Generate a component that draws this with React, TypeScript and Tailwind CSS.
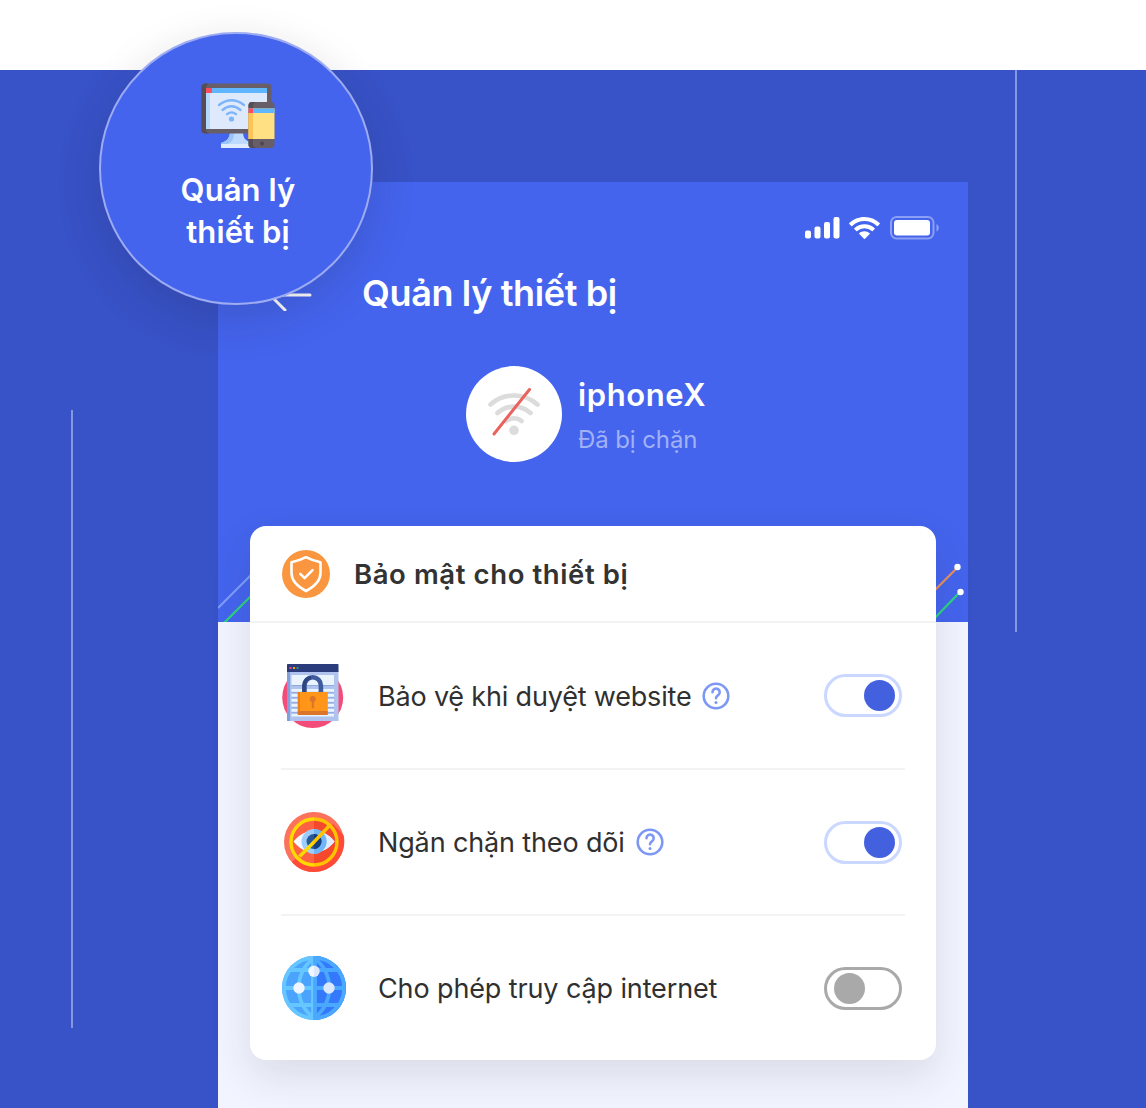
import type { ReactNode } from "react";

function DevicesIcon() {
  return (
    <svg className="mt-[49px] ml-1 h-[66px] w-[74px]" viewBox="0 0 74 66" fill="none">
      <path d="M29 48h13c0 7 2 9 7 11v5H20v-4c6-2 9-5 9-12Z" fill="#bedbff" />
      <path d="M29 48h4c0 8-1 11-7 13h-6v-1c6-2 9-5 9-12Z" fill="#9bc4fb" />
      <path d="M20 61h30v4H20z" fill="#deecfd" />
      <rect x=".5" y=".5" width="70" height="50" rx="4" fill="#685e68" />
      <path d="M5 .5h3c-2 1-3 2-3 4v42c0 2 1 3 3 4H5c-3 0-4.500-1-4.500-4V5C.5 2 2 .5 5 .5Z" fill="#554d56" />
      <path d="M5 5h61v41H5z" fill="#deeafb" />
      <path d="M5 10h4v36H5z" fill="#b3dafe" />
      <path d="M5 5h61v5H5z" fill="#60b7ff" />
      <path d="M5 5h6v5H5z" fill="#ff4b5b" />
      <g stroke="#7db4fa" strokeWidth="2.300" strokeLinecap="round">
        <path d="M18 22Q30.500 12.500 43 22M21.500 27Q30.500 19.500 39.500 27M26 31.200Q30.500 27.500 35 31.200" />
      </g>
      <circle cx="30.500" cy="36" r="2.600" fill="#7db4fa" />
      <rect x="47.500" y="19" width="26" height="46" rx="3.500" fill="#685e68" />
      <path d="M51 19h4c-2 1-3 2-3 4v38c0 2 1 3 3 4h-4c-2.500 0-3.500-1-3.500-3.500v-39C47.500 20 48.500 19 51 19Z" fill="#554d56" />
      <path d="M47.500 25.500h26V56h-26z" fill="#ffe082" />
      <path d="M47.500 30H52v26h-4.500z" fill="#ffc254" />
      <path d="M47.500 25.500h26V30h-26z" fill="#60b7ff" />
      <path d="M47.500 25.500H52V30h-4.500z" fill="#ff4b5b" />
      <circle cx="61" cy="60.500" r="2" fill="#4d454f" />
    </svg>
  );
}

function StatusBar() {
  return (
    <svg className="ml-[586px] h-6 w-[136px]" viewBox="0 0 136 24" fill="none">
      <g fill="#fff">
        <rect x="1" y="14.500" width="6" height="8" rx="2" />
        <rect x="10.500" y="10.500" width="6" height="12" rx="2" />
        <rect x="20" y="6" width="6" height="16.500" rx="2" />
        <rect x="29.500" y="1" width="6" height="21.500" rx="2" />
        <path d="M60.500 1C54.500 1 49.200 3.300 45.300 7c-.3.300-.3.600 0 .9l2 2c.3.300.6.300.9 0a18 18 0 0 1 24.600 0c.3.300.6.300.9 0l2-2c.3-.3.3-.6 0-.9A22 22 0 0 0 60.500 1Z" />
        <path d="M60.500 8.200c-4 0-7.500 1.500-10.200 4-.3.300-.3.600 0 .9l2 2c.3.300.6.300.9 0a11 11 0 0 1 14.600 0c.3.300.6.300.9 0l2-2c.3-.3.3-.6 0-.9-2.700-2.500-6.200-4-10.200-4Z" />
        <path d="M60.500 15.300c-2.100 0-3.900.7-5.200 1.900-.3.300-.3.600 0 .9l4.700 4.600c.3.300.7.300 1 0l4.700-4.600c.3-.3.3-.6 0-.9a8 8 0 0 0-5.200-1.900Z" />
        <rect x="90" y="4" width="36" height="15.500" rx="3" />
        <path d="M132.500 8c3 1.400 3 6.200 0 7.600Z" opacity=".4" />
      </g>
      <rect x="87" y="1" width="42.500" height="21.500" rx="5.500" stroke="#fff" strokeOpacity=".38" strokeWidth="2" />
    </svg>
  );
}

function BlockedWifi() {
  return (
    <div className="flex size-24 items-center justify-center rounded-full bg-white">
      <svg className="size-16" viewBox="0 0 64 64" fill="none" strokeLinecap="round">
        <g stroke="#dcdcdc" strokeWidth="4.700">
          <path d="M8.500 22.500C22 10.500 42 10.500 55.500 22.500" />
          <path d="M15.500 31C25 22.500 39 22.500 48.500 31" />
          <path d="M24 39C29 35.300 35 35.300 39.500 39" />
        </g>
        <circle cx="32" cy="48.300" r="4.800" fill="#dcdcdc" />
        <path d="M12 52 47.500 7.500" stroke="#e9625d" strokeWidth="3" />
      </svg>
    </div>
  );
}

function ShieldIcon() {
  return (
    <svg className="size-12" viewBox="0 0 48 48" fill="none" stroke="#fff" strokeLinecap="round" strokeLinejoin="round">
      <circle cx="24" cy="24" r="24" fill="#f9963f" stroke="none" />
      <path d="M24 7.200c4.500 2.500 9.500 4 14.500 5V23c0 8-6 13.500-14.500 18C15.500 36.500 9.500 31 9.500 23V12.200c5-1 10-2.500 14.500-5Z" strokeWidth="2.600" />
      <path d="m18.300 23.800 4.300 4.300 7.900-8" strokeWidth="2.600" />
    </svg>
  );
}

function WebsiteLockIcon() {
  return (
    <svg className="size-16" viewBox="0 0 64 64" fill="none">
      <circle cx="30.700" cy="33.500" r="30.500" fill="#f44c78" />
      <path d="M5 7h51.500v50H5z" fill="#afc3ee" />
      <path d="M5 7h3v50H5z" fill="#839fdb" />
      <path d="M6 0h49.500c.6 0 1 .4 1 1v7H5V1c0-.6.4-1 1-1Z" fill="#2a3c7b" />
      <path d="M7.500 3h2v2h-2z" fill="#f44c78" />
      <path d="M11 3h2v2h-2z" fill="#ffa000" />
      <path d="M14.500 3h2v2h-2z" fill="#279b71" />
      <path d="M9.500 11H52v10H9.500zM9.500 25H52v2.800H9.500zM9.500 30H52v2.800H9.500zM9.500 35H52v2.800H9.500zM9.500 40H52v2.800H9.500zM9.500 45H52v2.800H9.500zM9.500 50H52v2.500H9.500z" fill="#eaf4ff" />
      <path d="M9.500 21H52v1H9.500zM9.500 28H52v.8H9.500zM9.500 33H52v.8H9.500zM9.500 38H52v.8H9.500zM9.500 43H52v.8H9.500zM9.500 48H52v.8H9.500z" fill="#8fa9df" />
      <path d="M22.500 29v-7.500a8.200 8.200 0 0 1 16.400 0V29" stroke="#3e5c9d" strokeWidth="4.600" />
      <path d="M22 29v-7.500c0-4 3-7.500 7-8" stroke="#2e4781" strokeWidth="3.600" />
      <rect x="15.800" y="28" width="30" height="23" rx="1" fill="#ff9519" />
      <path d="M15.800 28H18v23h-2.200z" fill="#f07f18" />
      <path d="M15.800 47h30v3c0 .6-.4 1-1 1h-28c-.6 0-1-.4-1-1Z" fill="#db7529" />
      <circle cx="30.700" cy="35" r="3" fill="#db7529" />
      <path d="M30 37h1.700v7H30z" fill="#db7529" stroke="#db7529" strokeWidth=".5" />
    </svg>
  );
}

function TrackingIcon() {
  return (
    <svg className="size-16" viewBox="0 0 64 64" fill="none">
      <circle cx="32" cy="32" r="30" fill="#fc725b" />
      <path d="m51 14 10.500 11C66 43 51 62 32 62c-7 0-13-2-18-6L10 52Z" fill="#ff4a38" />
      <circle cx="32" cy="32" r="22" fill="#ff6243" />
      <path d="M32 10a22 22 0 0 1 0 44Z" fill="#f4492d" />
      <path d="M11.500 31.500C23 17 41 17 52.500 31.500 41 46 23 46 11.500 31.500Z" fill="#f6faff" />
      <path d="M32 20.700c7.500 0 15 3.600 20.500 10.800C47 38.800 39.500 42.400 32 42.400Z" fill="#deecff" />
      <circle cx="32" cy="31.500" r="12.500" fill="#9ccdfc" />
      <path d="M32 19a12.500 12.500 0 0 1 0 25Z" fill="#70b5fa" />
      <circle cx="32" cy="31.500" r="7.500" fill="#285898" />
      <path d="M32 24a7.500 7.500 0 0 1 0 15Z" fill="#15407b" />
      <g strokeWidth="3.400">
        <path d="M32 9a23 23 0 0 0 0 46" stroke="#ffda00" />
        <path d="M32 9a23 23 0 0 1 0 46" stroke="#ffc300" />
        <path d="M17.500 46.500 32 32" stroke="#ffda00" />
        <path d="m31.500 32.500 16-17" stroke="#ffc300" />
      </g>
    </svg>
  );
}

function GlobeIcon() {
  return (
    <svg className="size-16" viewBox="0 0 64 64" fill="none">
      <circle cx="32" cy="32" r="32" fill="#4aa4fd" />
      <path d="M32 0a32 32 0 0 1 0 64Z" fill="#3479fc" />
      <g strokeWidth="3.800">
        <g stroke="#66c6ff">
          <path d="M32 1.900a30.100 30.100 0 0 0 0 60.200M31 3C12 16 12 48 31 61M7 14h25M2 32h30M7 49h25M31 0v64" />
        </g>
        <g stroke="#4aa9ff">
          <path d="M32 1.900a30.100 30.100 0 0 1 0 60.200M33 3c19 13 19 45 0 58M32 14h25M32 32h30M32 49h25M33 0v64" />
        </g>
      </g>
      <circle cx="17" cy="32" r="5.700" fill="#eff6ff" />
      <path d="M32 9.500a5.700 5.700 0 0 0 0 11.400Z" fill="#eff6ff" />
      <path d="M32 9.500a5.700 5.700 0 0 1 0 11.400Z" fill="#dce8fa" />
      <circle cx="47" cy="32" r="5.700" fill="#dce8fa" />
    </svg>
  );
}

function HelpIcon() {
  return (
    <svg className="size-7 shrink-0" viewBox="0 0 28 28" fill="none" stroke="#7d97f4" strokeLinecap="round" strokeLinejoin="round">
      <circle cx="14" cy="14" r="12.300" strokeWidth="2.600" />
      <path d="M10.500 10.200a3.600 3.600 0 1 1 5.700 2.900c-1.400 1-2.200 1.600-2.200 3.100" strokeWidth="2.600" />
      <circle cx="14" cy="20.500" r="1.500" fill="#7d97f4" stroke="none" />
    </svg>
  );
}

function Toggle({ on }: { on: boolean }) {
  return (
    <div
      className={`flex h-[43px] w-[78px] items-center rounded-full border-[3px] ${
        on ? "justify-end border-[#cad7ff] pr-1" : "border-[#a9a9a9] pl-[7px]"
      }`}
    >
      <div className={`size-[31px] rounded-full ${on ? "bg-[#4361df]" : "bg-[#a9a9a9]"}`} />
    </div>
  );
}

function SettingRow({ icon, label, labelClass, help, on, className }: {
  icon: ReactNode;
  label: string;
  labelClass: string;
  help?: boolean;
  on: boolean;
  className: string;
}) {
  return (
    <div className={`mx-[31px] flex items-center border-[#f3f3f4] pr-[3px] pl-px ${className}`}>
      {icon}
      <span className={`ml-8 pt-0.5 whitespace-nowrap text-[27px] leading-9 text-[#303030] ${labelClass}`}>{label}</span>
      {help && <HelpIcon />}
      <div className="ml-auto">
        <Toggle on={on} />
      </div>
    </div>
  );
}

export default function App() {
  return (
    <div className="relative h-[1108px] w-[1146px] overflow-hidden bg-white pt-[70px] font-['Inter','Liberation_Sans',sans-serif]">
      <main className="relative h-[1038px] bg-[#3852c7] pt-[112px] pl-[218px]">
        <div className="absolute top-[340px] left-[71px] h-[618px] w-0.5 bg-[#8797dd]" />
        <div className="absolute top-0 left-[1015px] h-[562px] w-0.5 bg-[#8797dd]" />
        <section className="h-[926px] w-[750px] bg-[#f2f5ff]">
          <header className="relative h-[440px] bg-[#4464ed] pt-[34px]">
            <StatusBar />
            <div className="mt-[29px] flex h-12 items-center">
              <svg className="ml-[54px] h-9 w-10" viewBox="0 0 40 36" fill="none" stroke="#fff" strokeWidth="3" strokeLinecap="round" strokeLinejoin="round">
                <path d="M38 20H0M13 35-2 20 13 5" />
              </svg>
              <h1 className="ml-[50px] whitespace-nowrap text-[36px] leading-[48px] font-semibold tracking-[-0.37px] text-white">Quản lý thiết bị</h1>
            </div>
            <div className="mt-[49px] ml-[248px] flex gap-4">
              <BlockedWifi />
              <div className="pt-2 whitespace-nowrap text-white">
                <div className="text-[31px] leading-[42px] font-semibold tracking-[0.6px]">iphoneX</div>
                <div className="mt-1.5 text-2xl leading-9 tracking-[-0.1px] text-[#a1b1f6]">Đã bị chặn</div>
              </div>
            </div>
            <svg className="absolute inset-x-0 bottom-0 h-[70px] w-[750px]" viewBox="0 0 750 70" fill="none" strokeWidth="2.200">
              <path d="M0 56 40 16" stroke="#7f9cf8" />
              <path d="M6 71 42 35" stroke="#2bd47d" />
              <path d="m710 45 30-30" stroke="#e99257" />
              <path d="m710 73 32-33" stroke="#2bd47d" />
              <circle cx="739.500" cy="15" r="3.200" fill="#fff" />
              <circle cx="742.500" cy="40" r="3.200" fill="#fff" />
            </svg>
          </header>
          <div className="relative mx-8 -mt-24 h-[534px] rounded-2xl bg-white shadow-[0_16px_40px_rgba(40,40,60,0.12)]">
            <div className="flex h-[97px] items-center gap-6 border-b-2 border-[#f3f3f4] pl-8">
              <ShieldIcon />
              <h2 className="whitespace-nowrap text-[27.5px] leading-9 font-semibold tracking-[0.6px] text-[#333]">Bảo mật cho thiết bị</h2>
            </div>
            <SettingRow className="h-[147px] border-b-2" icon={<WebsiteLockIcon />} label="Bảo vệ khi duyệt website" labelClass="w-[324px] tracking-[-0.18px]" help on />
            <SettingRow className="h-[146px] border-b-2" icon={<TrackingIcon />} label="Ngăn chặn theo dõi" labelClass="w-[258px] tracking-[-0.14px]" help on />
            <SettingRow className="h-[144px]" icon={<GlobeIcon />} label="Cho phép truy cập internet" labelClass="tracking-[-0.12px]" on={false} />
          </div>
        </section>
      </main>
      <div className="absolute top-8 left-[99px] flex h-[273px] w-[274px] flex-col items-center rounded-full border-2 border-[#9cabf2] bg-[#4464ed] shadow-[0_14px_44px_rgba(30,30,50,0.17)]">
        <DevicesIcon />
        <p className="mt-5 ml-1 whitespace-nowrap text-center text-[31px] leading-[42px] font-semibold tracking-[0.1px] text-white">
          Quản lý
          <br />
          thiết bị
        </p>
      </div>
    </div>
  );
}
